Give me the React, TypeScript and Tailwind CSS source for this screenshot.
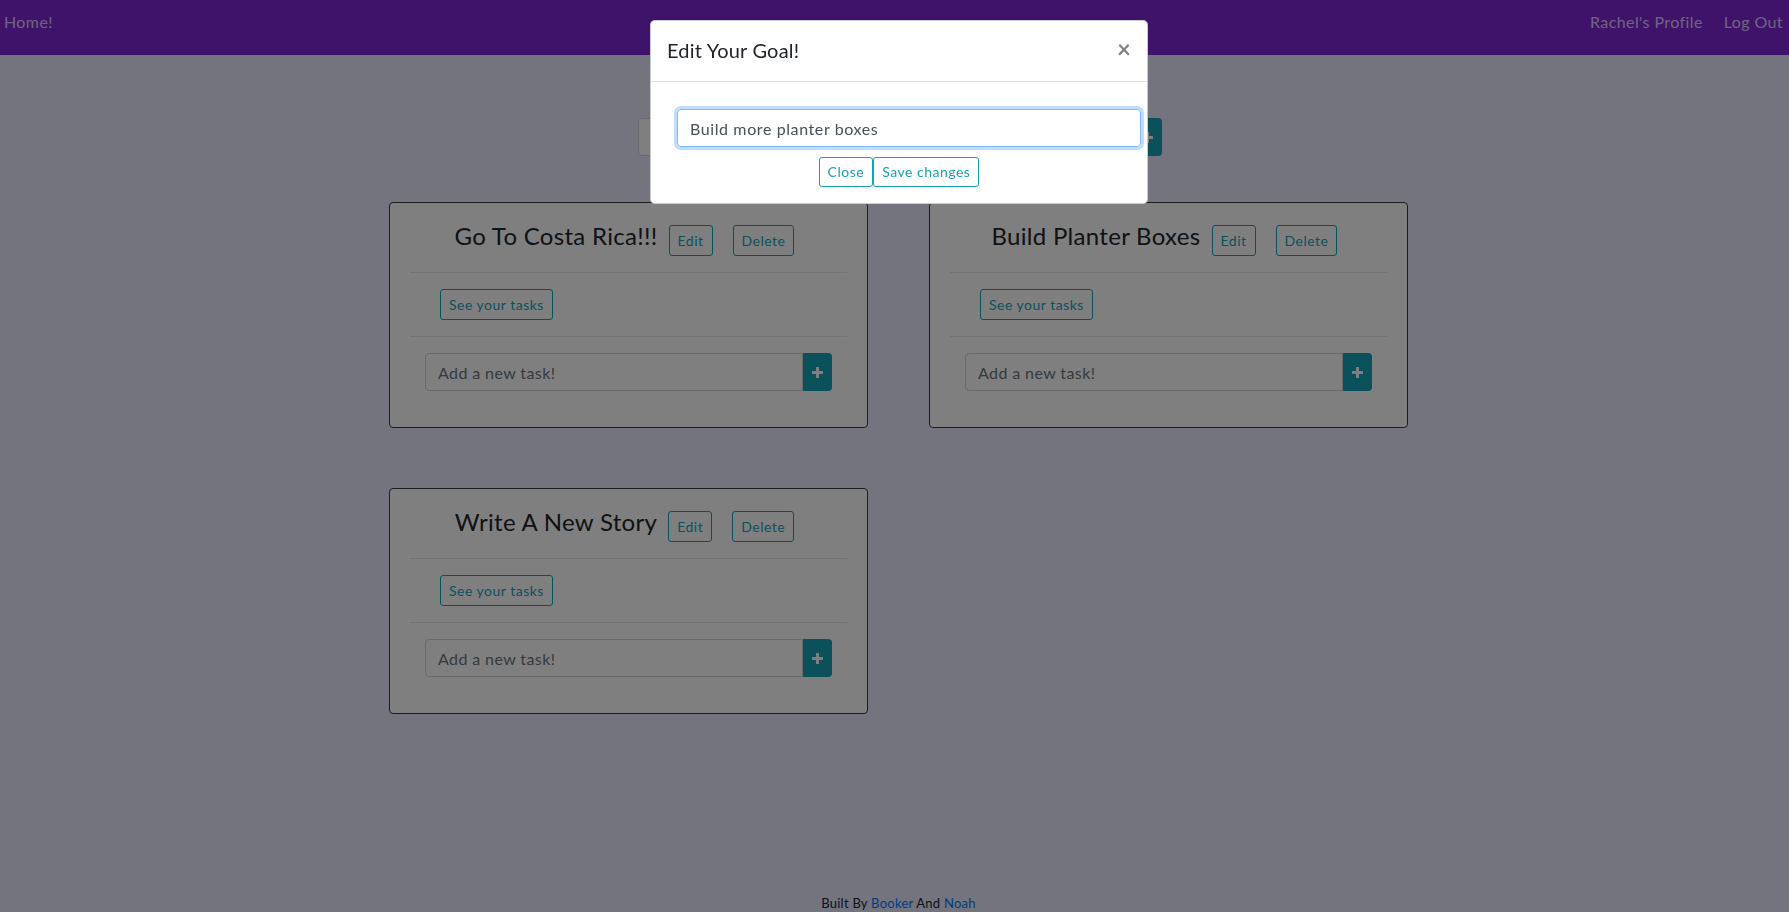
import { useState } from 'react'

const goals = ['Go To Costa Rica!!!', 'Build Planter Boxes', 'Write A New Story']

function PlusIcon() {
  return (
    <svg width="11" height="11" viewBox="0 0 11 11" fill="white">
      <rect x="4" y="0" width="3" height="11" rx="0.5" />
      <rect x="0" y="4" width="11" height="3" rx="0.5" />
    </svg>
  )
}

function OutlineButton({ children, className = '' }: { children: React.ReactNode; className?: string }) {
  return (
    <button
      className={`h-[31px] px-2 rounded-[3px] border border-[#17a2b8] text-[#17a2b8] text-[14px] leading-[21px] tracking-[0.5px] bg-transparent ${className}`}
    >
      {children}
    </button>
  )
}

function AddInput({ placeholder, width }: { placeholder: string; width: string }) {
  return (
    <div className={`flex ${width} h-[38px]`}>
      <input
        placeholder={placeholder}
        className="flex-1 min-w-0 h-full px-3 border border-[#ced4da] rounded-l-[4px] bg-white text-[16px] tracking-[0.4px] text-[#495057] placeholder:text-[#6c757d] outline-none"
      />
      <button className="w-[29px] h-full bg-[#17a2b8] rounded-r-[4px] flex items-center justify-center">
        <PlusIcon />
      </button>
    </div>
  )
}

function GoalCard({ title }: { title: string }) {
  return (
    <div className="w-[479px] border border-[#383838] rounded-[4px] bg-white p-5">
      <div className="flex justify-center items-start pr-2">
        <h4 className="text-[24px] leading-[1.2] tracking-[0.3px] text-[#212529] -mt-[1px]">{title}</h4>
        <OutlineButton className="ml-[11px] mt-[2px]">Edit</OutlineButton>
        <OutlineButton className="ml-5 mt-[2px]">Delete</OutlineButton>
      </div>
      <hr className="mt-4 border-0 border-t border-[#e6e6e6]" />
      <div className="mt-4 pl-[30px]">
        <OutlineButton>See your tasks</OutlineButton>
      </div>
      <hr className="mt-4 border-0 border-t border-[#e6e6e6]" />
      <div className="mt-4 px-[15px] mb-4">
        <AddInput placeholder="Add a new task!" width="w-full" />
      </div>
    </div>
  )
}

export default function App() {
  const [value, setValue] = useState('Build more planter boxes')

  return (
    <div className="relative min-h-screen flex flex-col bg-[#e6e8fd] text-[#212529] font-['Lato','Open_Sans',sans-serif]">
      <nav className="h-[55px] bg-[#8026d6] flex items-start justify-between pt-[10px] pl-1 pr-[6px] text-[16px] leading-6 tracking-[0.4px] text-[#ddc8ff]">
        <a>Home!</a>
        <div className="flex gap-[21px]">
          <a>Rachel's Profile</a>
          <a>Log Out</a>
        </div>
      </nav>

      <div className="pt-[63px] pl-[638px]">
        <AddInput placeholder="Add a new goal!" width="w-[524px]" />
      </div>

      <div className="mt-[46px] ml-[389px] grid grid-cols-[479px_479px] gap-x-[61px] gap-y-[60px] w-fit">
        {goals.map((g) => (
          <GoalCard key={g} title={g} />
        ))}
      </div>

      <footer className="mt-auto text-center text-[13px] leading-[18px] tracking-[0.25px] pl-2">
        Built By <a className="text-[#007bff]">Booker</a> And <a className="text-[#007bff]">Noah</a>
      </footer>

      {/* modal backdrop */}
      <div className="fixed inset-0 bg-black/50 z-10" />

      <div className="fixed top-[20px] left-[650px] w-[498px] z-20 bg-white border border-black/20 rounded-[5px]">
        <div className="flex items-start justify-between pt-[15px] pb-[16px] pl-4 pr-4 border-b border-[#dee2e6]">
          <h5 className="text-[20px] leading-[29px] tracking-[0.2px] text-[#212529]">Edit Your Goal!</h5>
          <button className="text-[24px] leading-[24px] font-bold text-black/50 mt-[1px]">×</button>
        </div>
        <div className="pt-[27px] pl-[26px] pr-[6px] pb-4">
          <input
            value={value}
            onChange={(e) => setValue(e.target.value)}
            className="w-full h-[38px] px-3 border border-[#80bdff] rounded-[4px] text-[16px] tracking-[0.6px] text-[#495057] outline-none shadow-[0_0_0_3px_rgba(0,123,255,0.25)]"
          />
          <div className="mt-[10px] flex justify-center pr-[20px]">
            <button className="h-[30px] px-2 rounded-[3px] border border-[#17a2b8] text-[#17a2b8] text-[14px] leading-[20px] tracking-[0.5px]">
              Close
            </button>
            <button className="h-[30px] px-2 rounded-[3px] border border-[#17a2b8] text-[#17a2b8] text-[14px] leading-[20px] tracking-[0.5px]">
              Save changes
            </button>
          </div>
        </div>
      </div>
    </div>
  )
}
